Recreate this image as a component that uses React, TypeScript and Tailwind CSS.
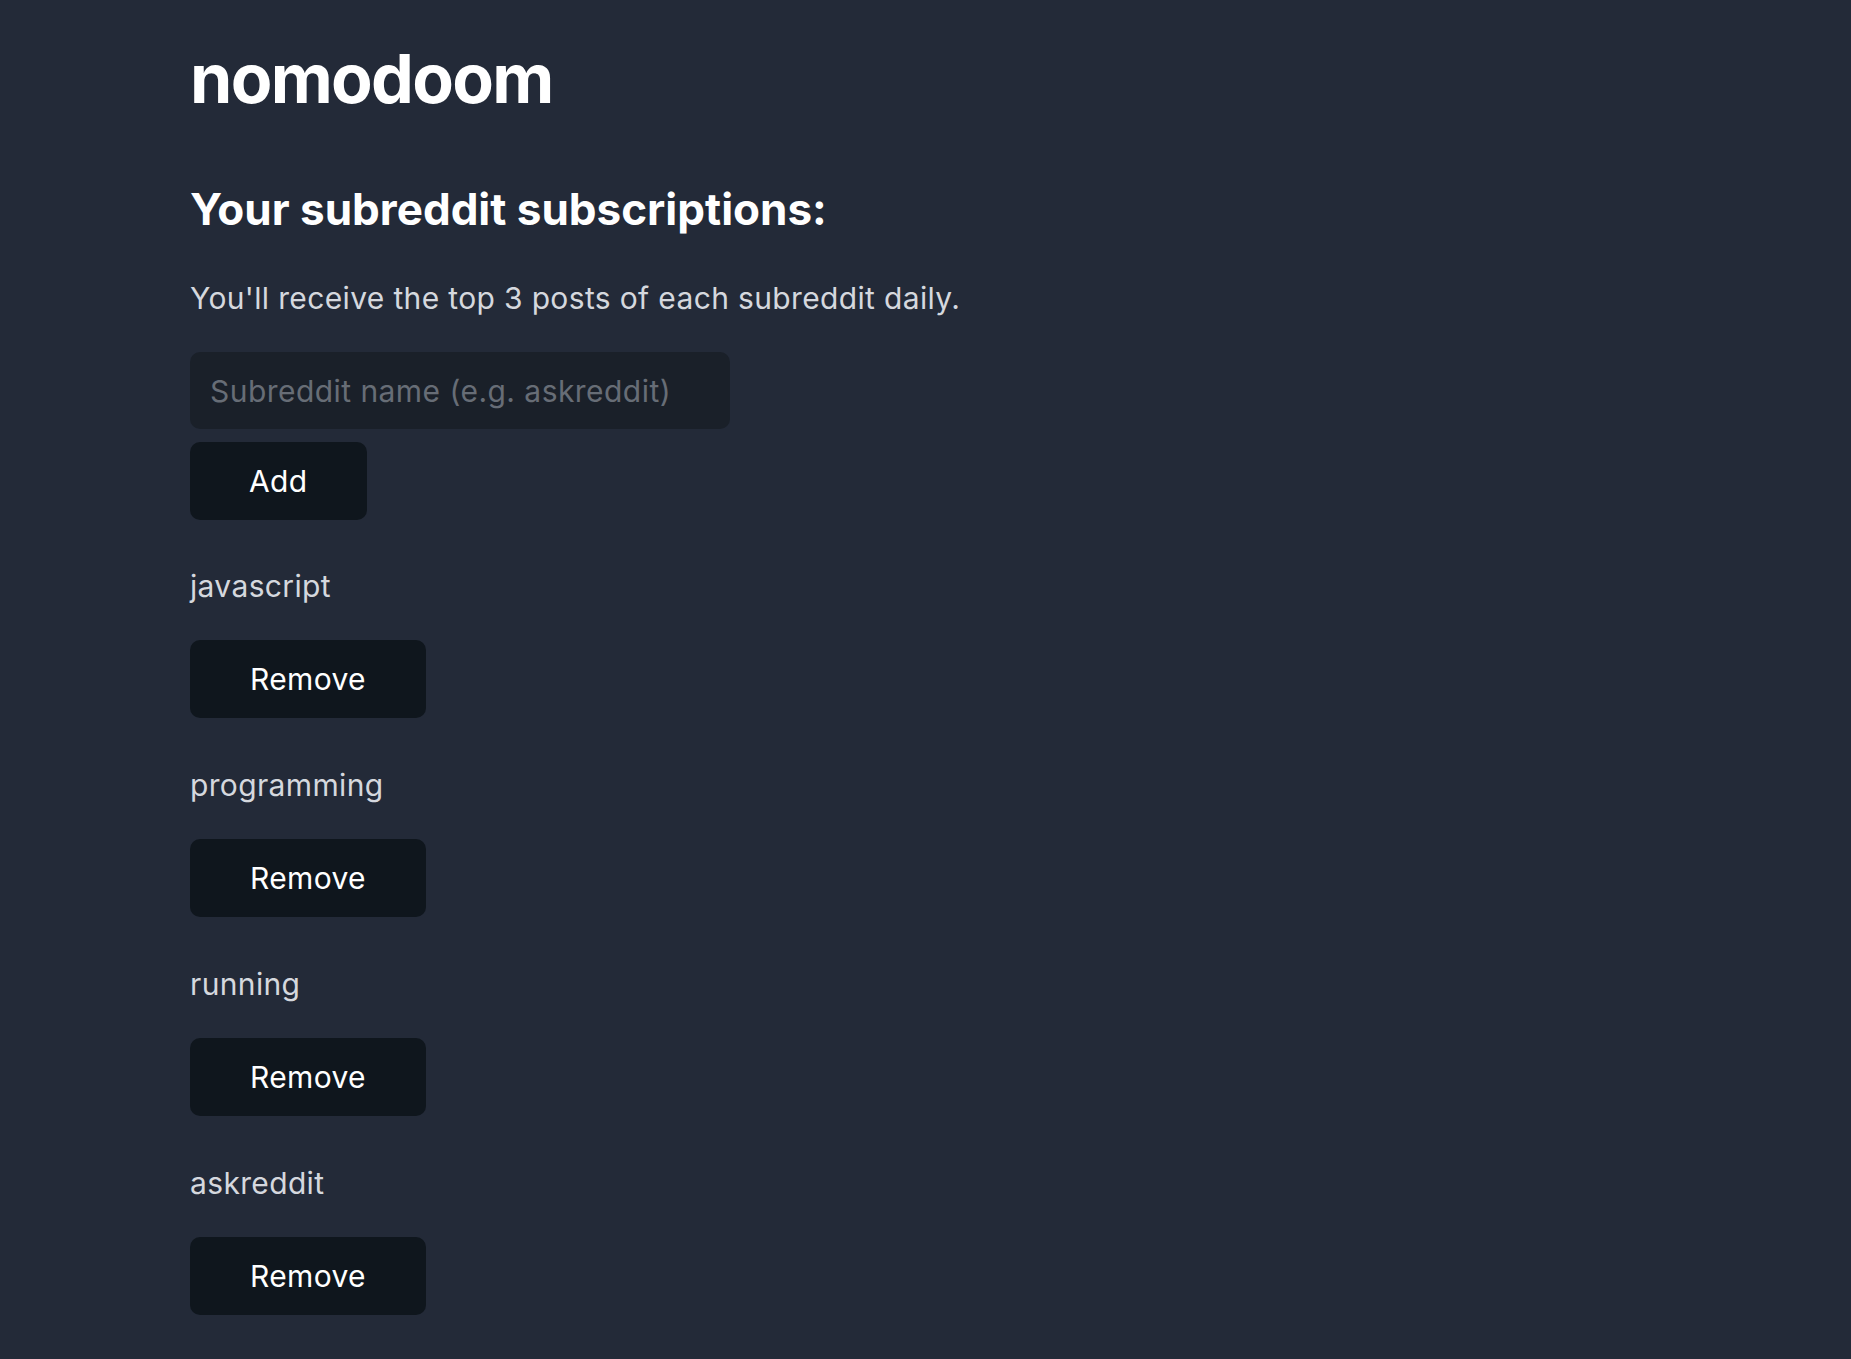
import { useState } from "react";

const initial = ["javascript", "programming", "running", "askreddit"];

export default function App() {
  const [subs, setSubs] = useState<string[]>(initial);
  const [name, setName] = useState("");

  const add = () => {
    const n = name.trim();
    if (!n || subs.includes(n)) return;
    setSubs([...subs, n]);
    setName("");
  };

  return (
    <div
      className="min-h-screen bg-[#232a38] text-[#d5d8de] px-[190px] pt-[35px] pb-10 tracking-[0.35px]"
      style={{ fontFamily: "Inter, 'Noto Sans', sans-serif" }}
    >
      {/* Header */}
      <h1 className="text-[68px] leading-[1.27] font-bold text-white tracking-[-1.7px]">
        nomodoom
      </h1>

      <h2 className="mt-[62px] text-[44px] leading-[1.2] font-bold text-white tracking-normal">
        Your subreddit subscriptions:
      </h2>

      <p className="mt-[40px] text-[30px] leading-[1.5]">
        You'll receive the top 3 posts of each subreddit daily.
      </p>

      {/* Add form */}
      <div className="mt-[31px] flex flex-col items-start gap-[13px]">
        <input
          value={name}
          onChange={(e) => setName(e.target.value)}
          placeholder="Subreddit name (e.g. askreddit)"
          className="w-[540px] h-[77px] rounded-[10px] bg-[#1a2029] px-[20px] text-[30px] tracking-[0.45px] text-white placeholder:text-[#676d76] outline-none"
        />
        <button
          onClick={add}
          className="h-[78px] rounded-[10px] bg-[#0f161d] px-[59px] text-[30px] text-white"
        >
          Add
        </button>
      </div>

      {/* Subscriptions */}
      <ul className="-mt-px">
        {subs.map((s) => (
          <li key={s} className="mt-[45px]">
            <p className="text-[30px] leading-[1.5] mb-[31px]">{s}</p>
            <button
              onClick={() => setSubs(subs.filter((x) => x !== s))}
              className="h-[78px] rounded-[10px] bg-[#0f161d] px-[60px] text-[30px] text-white"
            >
              Remove
            </button>
          </li>
        ))}
      </ul>
    </div>
  );
}
